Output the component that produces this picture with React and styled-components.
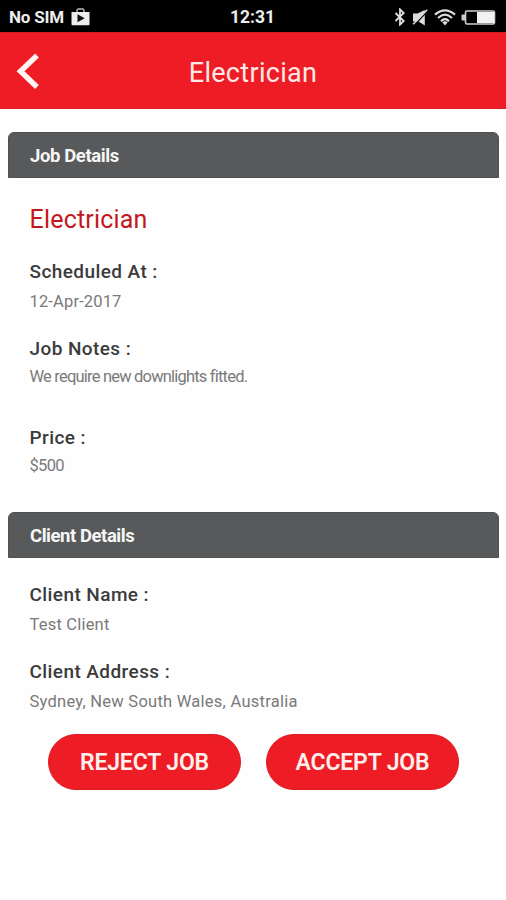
import React from "react";
import styled, { createGlobalStyle } from "styled-components";

const GlobalStyle = createGlobalStyle`
  * { box-sizing: border-box; }
  body { margin: 0; background: #fefefe; font-family: Roboto, sans-serif; }
`;

const Screen = styled.main`
  width: 506px;
  height: 900px;
  overflow: hidden;
  background: #fefefe;
  display: flex;
  flex-direction: column;
`;

const StatusBar = styled.div`
  height: 32px;
  flex: none;
  background: #000;
  color: #ededed;
  display: grid;
  grid-template-columns: 1fr auto 1fr;
  align-items: center;
  padding: 2px 10px 0 9px;
  font-size: 17px;
  line-height: 20px;
  font-weight: 700;
`;

const Carrier = styled.div`
  display: flex;
  align-items: center;
  gap: 7px;
`;

const CarrierName = styled.span`
  letter-spacing: -0.2px;
`;

const Clock = styled.span`
  font-size: 17.5px;
`;

const StatusIcons = styled.div`
  display: flex;
  justify-content: flex-end;
  align-items: center;
`;

const Glyph = styled.svg`
  display: block;
  flex: none;
`;

const AppBar = styled.header`
  height: 77px;
  flex: none;
  background: #ee1c24;
  border-top: 1px solid #d01c22;
  border-bottom: 1px solid #de1b22;
  display: grid;
  grid-template-columns: 60px 1fr 60px;
  align-items: center;
  padding-top: 5px;
`;

const BackButton = styled.button`
  border: 0;
  background: none;
  padding: 0 0 5px 16px;
  display: flex;
`;

const Title = styled.h1`
  margin: 0;
  font-size: 27px;
  line-height: 32px;
  font-weight: 400;
  letter-spacing: 0.3px;
  text-align: center;
  color: #ffe9e6;
`;

const SectionHeader = styled.h2`
  margin: 0 7px 0 8px;
  height: 46px;
  flex: none;
  padding: 2px 21px 0;
  display: flex;
  align-items: center;
  background: #58595b;
  border: 1px solid #4f5052;
  border-radius: 6px 6px 0 0;
  color: #f6f6f6;
  font-size: 18.5px;
  font-weight: 700;
  letter-spacing: ${(p) => p.$tracking}px;
`;

const JobSection = styled.section`
  padding-top: 23px;
  height: 403px;
  flex: none;
`;

const ClientSection = styled.section`
  height: 222px;
  flex: none;
`;

const Fields = styled.div`
  padding: ${(p) => p.$top}px 30px 0 29.5px;
`;

const JobName = styled.h3`
  margin: 0 0 27px;
  font-size: 25px;
  line-height: 30px;
  font-weight: 400;
  letter-spacing: 0.2px;
  color: #c3161d;
`;

const Field = styled.div`
  display: flex;
  flex-direction: column;
  gap: ${(p) => p.$gap}px;
  margin-bottom: ${(p) => p.$after || 0}px;
  white-space: nowrap;
`;

const Label = styled.div`
  font-size: 19px;
  line-height: 20px;
  font-weight: 500;
  letter-spacing: 0.42px;
  color: #3b3b3b;
`;

const Value = styled.div`
  font-size: 16.5px;
  line-height: 20px;
  font-weight: 400;
  letter-spacing: ${(p) => p.$tracking || 0}px;
  color: #7a7a7a;
`;

const Actions = styled.div`
  display: flex;
  gap: 25px;
  padding-left: 48px;
`;

const ActionButton = styled.button`
  width: 193px;
  height: 56px;
  border: 1px solid #de1b22;
  border-radius: 28px;
  background: #ee1c24;
  padding: 2px 0 0;
  color: #fff0ee;
  font: 600 23px/28px Roboto, sans-serif;
  letter-spacing: -0.15px;
`;

function StoreBagIcon() {
  return (
    <Glyph width="19" height="18" viewBox="0 0 19 18">
      <path d="M6 5V2.6Q6 1 7.6 1h3.8Q13 1 13 2.6V5" fill="none" stroke="#bbb" strokeWidth="1.4" />
      <path d="M.5 4h18v12.2q0 1-1 1h-16q-1 0-1-1z" fill="#ededed" />
      <path d="M6.5 6.3v8l7.2-4z" fill="#111" />
    </Glyph>
  );
}

function BluetoothIcon() {
  return (
    <Glyph width="12" height="18" viewBox="0 0 12 18">
      <path d="M1.5 5l8.2 8L6 16.6V1.4L9.7 5l-8.2 8" fill="none" stroke="#e0e0e0" strokeWidth="1.8" />
    </Glyph>
  );
}

function MutedIcon() {
  return (
    <Glyph width="17" height="17" viewBox="0 0 17 17">
      <path d="M1 4.5h4.5L12.8 1v15.5L6.5 12.5H1z" fill="#dcdcdc" />
      <path d="M2 16.5L15.8 1.8" stroke="#000" strokeWidth="1.3" />
      <path d="M1.2 15.2L15.2 .8" stroke="#dcdcdc" strokeWidth="1.6" />
    </Glyph>
  );
}

function WifiIcon() {
  return (
    <Glyph width="22" height="17" viewBox="0 0 22 17">
      <g fill="none" stroke="#dedede" strokeWidth="2.1">
        <path d="M1 5.6Q11-3 21 5.6" />
        <path d="M4 9Q11 2.4 18 9" />
        <path d="M7 12.2Q11 8 15 12.2" />
      </g>
      <path d="M8.3 13.2Q11 11.2 13.7 13.2L11 16.5z" fill="#dedede" />
    </Glyph>
  );
}

function BatteryIcon() {
  return (
    <Glyph width="35" height="15" viewBox="0 0 35 15">
      <rect x="0.5" y="4.5" width="4" height="6" rx="1" fill="#ccc" />
      <rect x="4.5" y="1" width="29" height="13" rx="1.5" fill="#000" stroke="#d0d0d0" strokeWidth="1.6" />
      <rect x="16" y="2" width="17" height="11" fill="#f2f2f2" />
    </Glyph>
  );
}

const IconSlot = styled.span`
  display: flex;
  margin-left: ${(p) => p.$before}px;
`;

export default function App() {
  return (
    <Screen>
      <GlobalStyle />
      <StatusBar>
        <Carrier>
          <CarrierName>No SIM</CarrierName>
          <StoreBagIcon />
        </Carrier>
        <Clock>12:31</Clock>
        <StatusIcons>
          <BluetoothIcon />
          <IconSlot $before={6}><MutedIcon /></IconSlot>
          <IconSlot $before={5}><WifiIcon /></IconSlot>
          <IconSlot $before={5}><BatteryIcon /></IconSlot>
        </StatusIcons>
      </StatusBar>
      <AppBar>
        <BackButton aria-label="Back">
          <Glyph width="24" height="36" viewBox="0 0 24 36">
            <path d="M21 2.5L4.5 18.3L21 34" fill="none" stroke="#fff4f2" strokeWidth="5.4" />
          </Glyph>
        </BackButton>
        <Title>Electrician</Title>
      </AppBar>
      <JobSection>
        <SectionHeader $tracking={-0.4}>Job Details</SectionHeader>
        <Fields $top={27}>
          <JobName>Electrician</JobName>
          <Field $gap={10} $after={27}>
            <Label>Scheduled At :</Label>
            <Value $tracking={0.15}>12-Apr-2017</Value>
          </Field>
          <Field $gap={8} $after={41}>
            <Label>Job Notes :</Label>
            <Value $tracking={-0.8}>We require new downlights fitted.</Value>
          </Field>
          <Field $gap={8}>
            <Label>Price :</Label>
            <Value $tracking={-0.7}>$500</Value>
          </Field>
        </Fields>
      </JobSection>
      <ClientSection>
        <SectionHeader $tracking={-0.45}>Client Details</SectionHeader>
        <Fields $top={27}>
          <Field $gap={10} $after={27}>
            <Label>Client Name :</Label>
            <Value $tracking={0.2}>Test Client</Value>
          </Field>
          <Field $gap={10}>
            <Label>Client Address :</Label>
            <Value $tracking={0.25}>Sydney, New South Wales, Australia</Value>
          </Field>
        </Fields>
      </ClientSection>
      <Actions>
        <ActionButton>REJECT JOB</ActionButton>
        <ActionButton>ACCEPT JOB</ActionButton>
      </Actions>
    </Screen>
  );
}
